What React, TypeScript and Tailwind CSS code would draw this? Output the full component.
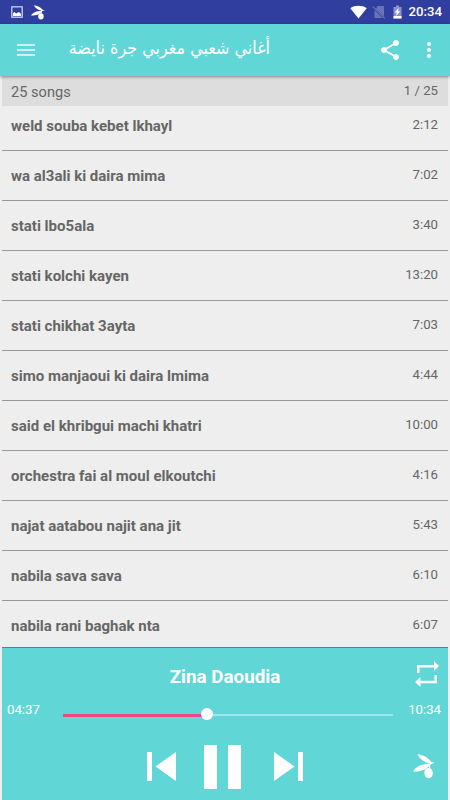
const SONGS = [
  { title: "weld souba kebet lkhayl", duration: "2:12" },
  { title: "wa al3ali ki daira mima", duration: "7:02" },
  { title: "stati lbo5ala", duration: "3:40" },
  { title: "stati kolchi kayen", duration: "13:20" },
  { title: "stati chikhat 3ayta", duration: "7:03" },
  { title: "simo manjaoui ki daira lmima", duration: "4:44" },
  { title: "said el khribgui machi khatri", duration: "10:00" },
  { title: "orchestra fai al moul elkoutchi", duration: "4:16" },
  { title: "najat aatabou najit ana jit", duration: "5:43" },
  { title: "nabila sava sava", duration: "6:10" },
  { title: "nabila rani baghak nta", duration: "6:07" },
];

function OliveIcon({ className }: { className: string }) {
  return (
    <svg viewBox="0 0 22 26" preserveAspectRatio="none" className={className} fill="currentColor">
      <path d="M4.5 0.3C9.5 0.8 15.5 3.6 18.2 8.3L21.8 9.2L18 10.3C12.5 9.2 7 6 4.5 0.3Z" />
      <path d="M0 18.3C2.5 13 8.5 10.3 18 9.8C15 15.8 8 18.6 0 18.3Z" />
      <path d="M16 9h1.2v6H16z" />
      <ellipse cx="15.6" cy="19.8" rx="4.3" ry="5.3" />
    </svg>
  );
}

function StatusBar() {
  return (
    <div className="flex h-6 shrink-0 items-center justify-between bg-[#303f9f] pr-2 pl-[11px] text-white">
      <div className="flex items-center gap-2">
        <svg viewBox="0 0 12 12" className="size-3">
          <rect x="0.75" y="0.75" width="10.5" height="10.5" rx="0.5" fill="none" stroke="#b9bfe2" strokeWidth="1.5" />
          <path d="M2 10V7l1.500-1L5 7.500 8 6l2 2v2Z" fill="#fff" />
        </svg>
        <OliveIcon className="h-[15px] w-[14px]" />
      </div>
      <div className="flex items-center">
        <svg viewBox="0 0 17 14" className="h-[14px] w-[17px]" fill="currentColor">
          <path d="M8.500 13.500.3 3.200C5 0 12 0 16.700 3.200Z" />
        </svg>
        <svg viewBox="0 0 14 14" className="ml-[5px] size-[14px]">
          <path d="M5.500 1H12v10.500L4 4Z M2.500 5l8 8h-8Z" fill="#6973b9" />
          <path d="m.7 1.300 12 12" stroke="#6973b9" strokeWidth="1.2" />
        </svg>
        <svg viewBox="0 0 9 14" className="ml-[7px] h-[14px] w-[9px]">
          <path d="M3 .5h3V2h2.500v11.500h-8V2H3Z" fill="#8c93ca" />
          <path d="M.5 11h8v2.500h-8Z M5.500 3 1.800 7.500h2L3.200 11l4-4.700h-2Z" fill="#fff" />
        </svg>
        <span className="ml-[7px] text-[13.2px] leading-6 font-medium">20:34</span>
      </div>
    </div>
  );
}

function Toolbar() {
  return (
    <header className="relative z-10 flex h-[52px] shrink-0 items-center bg-[#61d6d6] pl-[17px] text-white shadow-[0_1px_3px_rgba(0,0,0,0.4)]">
      <svg viewBox="0 0 18 14" className="h-[14px] w-[18px]" fill="#c9f2f2">
        <path d="M0 1h18v2H0Z M0 6h18v2H0Z M0 11h18v2H0Z" />
      </svg>
      <h1
        dir="rtl"
        className="mb-1 ml-[33px] w-[202px] font-['DejaVu_Sans_Condensed','DejaVu_Sans',sans-serif] text-[17.8px] leading-6 font-normal whitespace-nowrap"
      >
        أغاني شعبي مغربي جرة نايضة
      </h1>
      <svg viewBox="3 2 18 20" className="ml-[111px] h-[20px] w-[18px]" fill="currentColor">
        <path d="M18 16.080c-.76 0-1.440.3-1.960.77L8.910 12.700c.05-.23.09-.46.09-.7s-.04-.47-.09-.7l7.050-4.110c.54.5 1.250.81 2.040.81 1.660 0 3-1.340 3-3s-1.340-3-3-3-3 1.340-3 3c0 .24.04.47.09.7L8.040 9.810C7.500 9.310 6.790 9 6 9c-1.660 0-3 1.340-3 3s1.340 3 3 3c.79 0 1.500-.31 2.040-.81l7.120 4.160c-.05.21-.08.43-.08.65 0 1.610 1.310 2.920 2.920 2.920s2.920-1.310 2.920-2.920-1.310-2.920-2.920-2.920Z" />
      </svg>
      <svg viewBox="0 0 4 16" className="ml-[28px] h-4 w-1" fill="currentColor">
        <circle cx="2" cy="2" r="2" />
        <circle cx="2" cy="8" r="2" />
        <circle cx="2" cy="14" r="2" />
      </svg>
    </header>
  );
}

function SongList() {
  return (
    <main className="mx-0.5 flex min-h-0 flex-1 flex-col text-[#666]">
      <div className="z-1 flex h-[30px] shrink-0 justify-between bg-[#ddd] pr-[10px] pl-[9px] leading-[30px]">
        <span className="pt-px text-[14.6px]">25 songs</span>
        <span className="text-[13.2px]">1 / 25</span>
      </div>
      <ul className="-mt-[5px] min-h-0 flex-1 overflow-hidden">
        {SONGS.map((song) => (
          <li
            key={song.title}
            className="flex h-[50px] justify-between border-b border-[#999] pr-[10px] pl-[9px] leading-[49px]"
          >
            <span className="pt-px text-[15.02px] font-bold">{song.title}</span>
            <span className="text-[13.2px] leading-[47px]">{song.duration}</span>
          </li>
        ))}
      </ul>
    </main>
  );
}

function Player() {
  return (
    <footer className="mx-0.5 flex h-[153px] shrink-0 flex-col border-t border-[#2b9494] bg-[#61d6d6] text-white">
      <div className="grid h-[50px] grid-cols-[1fr_auto_1fr] pr-[9px] pl-[9px]">
        <h2 className="col-start-2 pt-[5px] text-[18.8px] leading-12 font-bold">Zina Daoudia</h2>
        <svg viewBox="0 0 24 26" className="mt-[13px] h-[26px] w-6 justify-self-end" fill="currentColor">
          <path d="M2 12V4h17V0l5 5-5 5V6.500H4.500V12Z" />
          <path d="M22 14v8.300H5.500V26L0 21l5.500-5v3.800h14V14Z" />
        </svg>
      </div>

      <div className="flex h-[30px] pr-[7px] pl-[5px] text-[13.2px] leading-[23px]">
        <span className="w-14">04:37</span>
        <div className="mt-[11px] flex h-[12px] w-[330px] items-center">
          <div className="h-[3px] w-[139px] bg-[#ee4583]" />
          <div className="mb-[2px] -ml-[1px] size-3 rounded-full bg-white" />
          <div className="h-[2px] flex-1 bg-[#a0e7e7]" />
        </div>
        <span className="ml-auto">10:34</span>
      </div>

      <div className="flex flex-1 pl-[145px]">
        <svg viewBox="0 0 29 29" className="mt-[24px] size-[29px]" fill="currentColor">
          <path d="M0 0h5v29H0Z M29 0v29L8.500 14.500Z" />
        </svg>
        <svg viewBox="0 0 37 44" className="mt-[17px] ml-[28px] h-11 w-[37px]" fill="currentColor">
          <path d="M0 0h13v44H0Z M24 0h13v44H24Z" />
        </svg>
        <svg viewBox="0 0 29 29" className="mt-[24px] ml-[32.5px] size-[29px]" fill="currentColor">
          <path d="M24 0h5v29h-5Z M0 0v29l20.500-14.500Z" />
        </svg>
        <OliveIcon className="mt-[26px] ml-[110px] h-[25px] w-[22px]" />
      </div>
    </footer>
  );
}

export default function App() {
  return (
    <div className="flex h-[800px] w-[450px] flex-col overflow-hidden bg-[#eee] font-[Roboto,'Noto_Sans',sans-serif]">
      <StatusBar />
      <Toolbar />
      <SongList />
      <Player />
    </div>
  );
}
